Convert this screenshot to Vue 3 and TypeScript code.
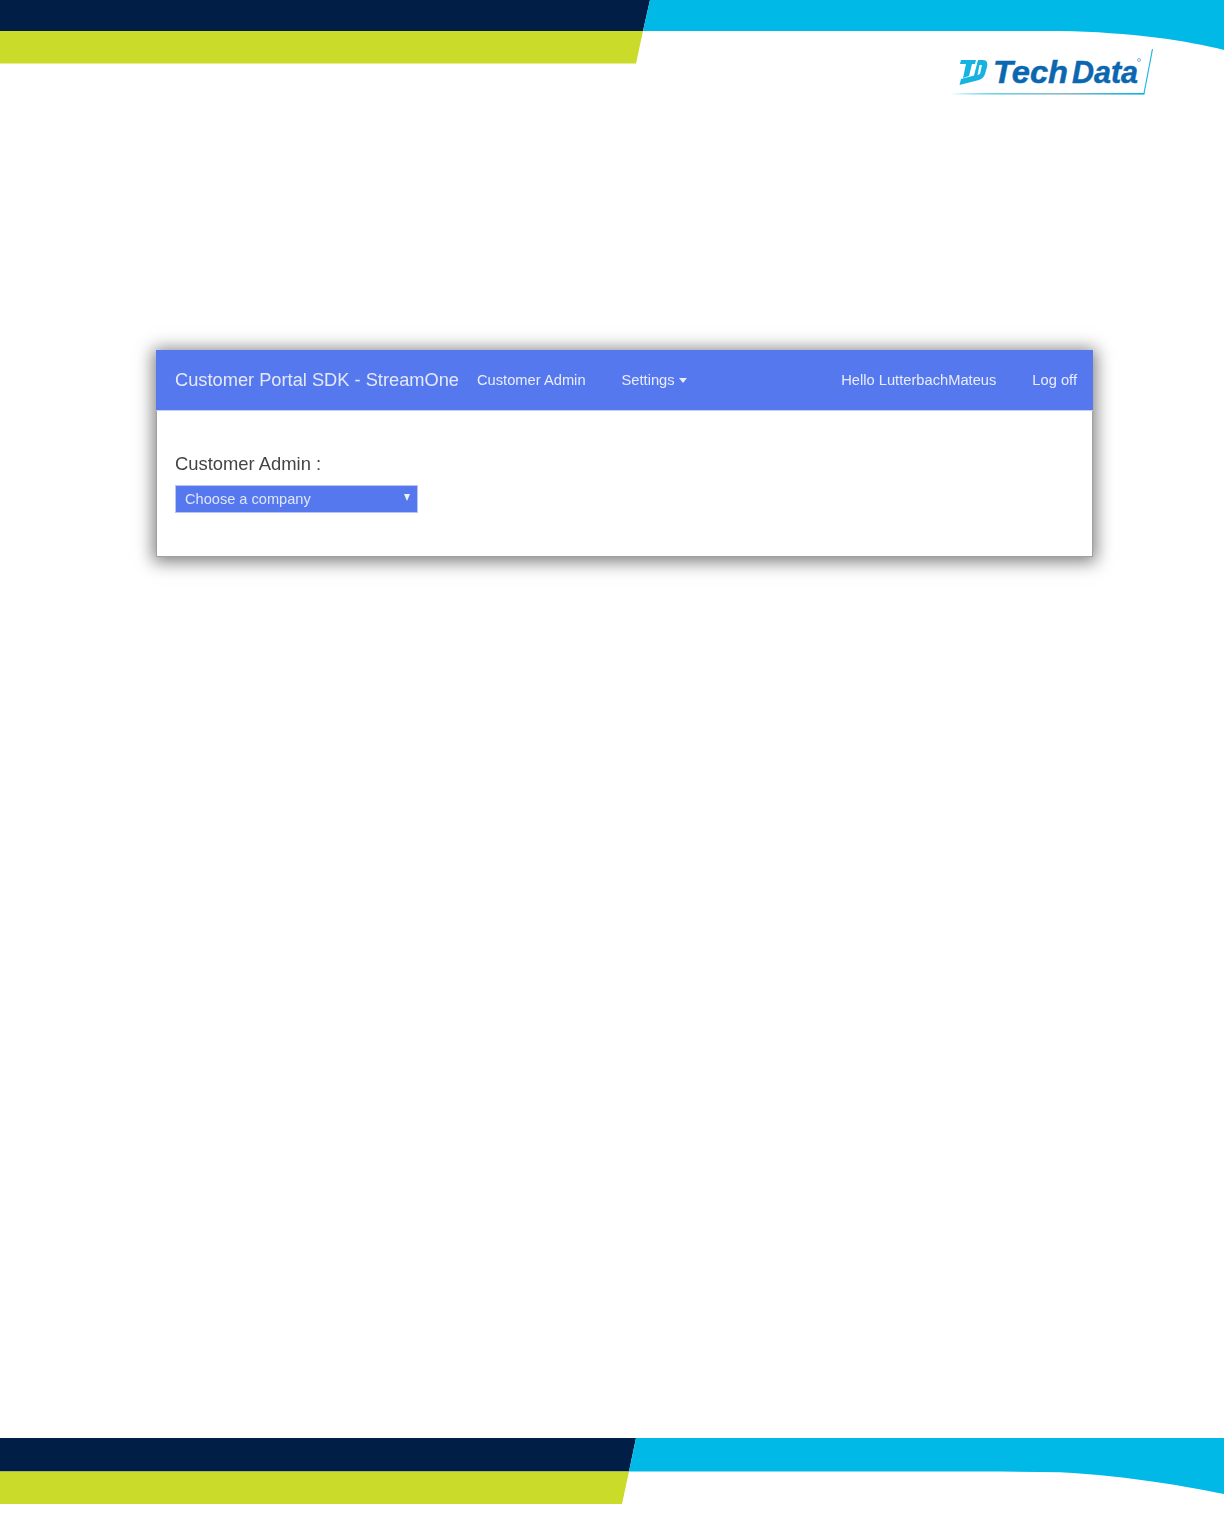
<template>
  <div class="page">
    <header class="doc-header">
      <svg class="banner" width="1224" height="96" viewBox="0 0 1224 96" role="img" aria-label="Tech Data">
        <defs>
          <linearGradient id="logoLine" x1="0" x2="1" y1="0" y2="0">
            <stop offset="0" stop-color="#00b9e6" stop-opacity="0" />
            <stop offset="0.25" stop-color="#6fd0ea" />
            <stop offset="0.6" stop-color="#8fb6c6" />
            <stop offset="1" stop-color="#00b4e2" />
          </linearGradient>
        </defs>
        <polygon points="0,0 650,0 643,31 0,31" fill="#001e46" />
        <polygon points="0,31 643,31 636,63.5 0,63.5" fill="#cbdb2a" />
        <path d="M650 0H1224V50C1190 41 1130 32 1060 31H643Z" fill="#00b9e6" />
        <!-- TD monogram -->
        <path d="M961 60H976L975 64H972L969 76L963 78L966 64H960Z" fill="#16b3e2" />
        <path d="M978 60H983C987 60 988 63 987 67L985 74C984 77 982 79 979 80L959.5 85L961 79L974 75.5Z" fill="#16b3e2" />
        <path d="M979.5 65H982L980 74L977.5 75Z" fill="#ffffff" />
        <text class="logo-text" x="993" y="83" textLength="75" lengthAdjust="spacingAndGlyphs">Tech</text>
        <text class="logo-text" x="1072" y="83" textLength="66" lengthAdjust="spacingAndGlyphs">Data</text>
        <circle cx="1139" cy="60" r="1.5" fill="none" stroke="#4d97c8" stroke-width="0.7" />
        <line x1="1152.5" y1="49" x2="1144" y2="93.5" stroke="#22b8e4" stroke-width="1.2" />
        <rect x="950" y="93" width="194.5" height="1.6" fill="url(#logoLine)" />
      </svg>
    </header>

    <main class="content">
      <section class="portal-card">
        <nav class="portal-nav">
          <span class="brand">Customer Portal SDK - StreamOne</span>
          <a class="nav-link">Customer Admin</a>
          <a class="nav-link">Settings <i class="nav-caret"></i></a>
          <span class="nav-spacer"></span>
          <a class="nav-link">Hello LutterbachMateus</a>
          <a class="nav-link">Log off</a>
        </nav>
        <div class="portal-body">
          <div class="field-label">Customer Admin :</div>
          <div class="select-box">
            <span>{{ selected }}</span>
            <i class="select-caret"></i>
          </div>
        </div>
      </section>
    </main>

    <footer class="doc-footer">
      <svg class="banner" width="1224" height="66" viewBox="0 0 1224 66" aria-hidden="true">
        <polygon points="0,0 636,0 629,33.5 0,33.5" fill="#001e46" />
        <polygon points="0,33.5 629,33.5 622,66 0,66" fill="#cbdb2a" />
        <path d="M636 0H1224V56C1190 49 1130 38 1060 34.2L1000 33.5H629Z" fill="#00b9e6" />
      </svg>
    </footer>
  </div>
</template>

<script setup lang="ts">
import { ref } from 'vue'

const selected = ref('Choose a company')
</script>

<style>
html,
body {
  margin: 0;
  background: #ffffff;
}
</style>

<style scoped>
.page {
  display: flex;
  flex-direction: column;
  height: 1525px;
  overflow: hidden;
  font-family: "Liberation Sans", Arial, sans-serif;
}

.banner {
  display: block;
}

.logo-text {
  font-family: "Liberation Sans", Arial, sans-serif;
  font-size: 32px;
  font-weight: 700;
  font-style: italic;
  fill: #0b67b0;
  stroke: #0b67b0;
  stroke-width: 0.5px;
}

.content {
  flex: 1;
  padding: 254px 131px 0 156px;
}

.portal-card {
  height: 207px;
  box-sizing: border-box;
  background: #ffffff;
  border: 1px solid #a0a0a0;
  box-shadow: 0 2px 16px 3px rgba(0, 0, 0, 0.5);
}

.portal-nav {
  display: flex;
  align-items: center;
  height: 60px;
  padding: 0 16px 0 19px;
  background: #5578ef;
  border-bottom: 1px solid #c3cff5;
  margin: -1px -1px 0;
}

.brand {
  font-size: 18.25px;
  color: #e4e9fa;
  margin-right: 18px;
  white-space: nowrap;
  filter: blur(0.6px);
}

.nav-link {
  font-size: 14.7px;
  color: #e9edfb;
  white-space: nowrap;
  filter: blur(0.6px);
}

.nav-link + .nav-link {
  margin-left: 36px;
}

.nav-spacer + .nav-link {
  margin-left: 0;
}

.nav-spacer {
  flex: 1;
}

.nav-caret {
  display: inline-block;
  width: 0;
  height: 0;
  vertical-align: 2px;
  border-left: 4.5px solid transparent;
  border-right: 4.5px solid transparent;
  border-top: 5px solid #e9edfb;
}

.portal-body {
  padding: 42px 18px 0;
}

.field-label {
  font-size: 18.4px;
  line-height: 22px;
  color: #444444;
  margin-bottom: 10px;
  filter: blur(0.6px);
}

.select-box {
  position: relative;
  display: flex;
  align-items: center;
  box-sizing: border-box;
  width: 243px;
  height: 28px;
  padding-left: 9px;
  background: #5578ef;
  border: 1px solid #b9c6f2;
  font-size: 14.6px;
  color: #dfe5fa;
}

.select-box span {
  filter: blur(0.6px);
}

.select-caret {
  position: absolute;
  right: 7px;
  top: 8px;
  width: 0;
  height: 0;
  border-left: 3.5px solid transparent;
  border-right: 3.5px solid transparent;
  border-top: 7px solid #f0f3fd;
}

.doc-footer {
  padding-bottom: 21px;
}
</style>
